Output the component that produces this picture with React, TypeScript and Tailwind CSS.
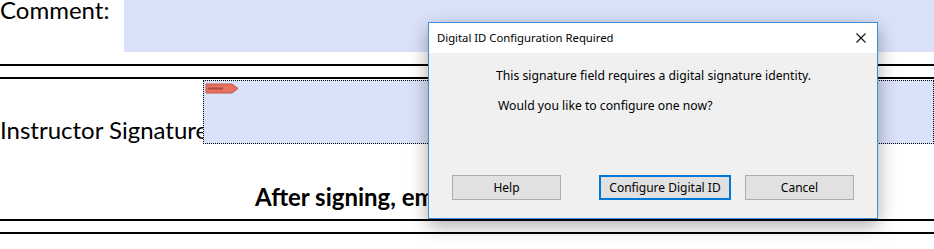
import React from 'react';

const docFont = { fontFamily: 'Lato, "Open Sans", sans-serif' };
const uiFont = { fontFamily: '"Noto Sans", "Liberation Sans", sans-serif' };

function Rule() {
  return <div className="h-[2px] w-full bg-black" />;
}

function FieldFlag() {
  return (
    <svg width="34" height="11" viewBox="0 0 34 11" className="absolute left-[1px] top-[2px]">
      <path d="M1 1 H27 L33 5.5 L27 10 H1 Z" fill="#e8705f" stroke="#c0564a" strokeWidth="1" />
      <rect x="3" y="4.5" width="15" height="2" fill="#7a2c26" opacity="0.55" />
    </svg>
  );
}

function DialogButton({ label, primary, width }: { label: string; primary?: boolean; width: string }) {
  return (
    <button
      className={`h-[25px] ${width} bg-[#e1e1e1] text-[12px] text-black ${
        primary ? 'border-2 border-[#0078d7]' : 'border border-[#adadad]'
      }`}
      style={uiFont}
    >
      {label}
    </button>
  );
}

function ConfigDialog() {
  return (
    <div className="absolute left-[428px] top-[22px] flex h-[197px] w-[450px] flex-col border border-[#3c8fd6] bg-[#f0f0f0] shadow-[0_6px_18px_rgba(0,0,0,0.35)]">
      {/* Title bar */}
      <div className="flex h-[30px] items-center justify-between bg-white pl-[8px] pr-[11px]">
        <span className="text-[11.3px] text-black" style={uiFont}>
          Digital ID Configuration Required
        </span>
        <svg width="10" height="10" viewBox="0 0 10 10">
          <path d="M0.5 0.5 L9.5 9.5 M9.5 0.5 L0.5 9.5" stroke="#111" strokeWidth="1.1" />
        </svg>
      </div>

      {/* Message */}
      <div className="flex flex-col pl-[67px] pt-[15px] text-[12.2px] leading-[16px] text-black" style={uiFont}>
        <p className="whitespace-nowrap">This signature field requires a digital signature identity.</p>
        <p className="mt-[14px] whitespace-nowrap pl-[2px]">Would you like to configure one now?</p>
      </div>

      {/* Buttons */}
      <div className="mt-auto flex items-center pb-[18px] pl-[23px]">
        <DialogButton label="Help" width="w-[109px]" />
        <div className="w-[38px]" />
        <DialogButton label="Configure Digital ID" width="w-[132px]" primary />
        <div className="w-[14px]" />
        <DialogButton label="Cancel" width="w-[109px]" />
      </div>
    </div>
  );
}

export default function App() {
  return (
    <div className="relative h-[249px] w-[934px] overflow-hidden bg-white text-black" style={docFont}>
      {/* Comment row */}
      <div className="flex h-[52px]">
        <div className="w-[124px] whitespace-nowrap text-[24px] leading-none -mt-[2px]">Comment:</div>
        <div className="flex-1 bg-[#dae2fa]" />
      </div>

      <div className="mt-[12px]">
        <Rule />
      </div>
      <div className="mt-[11px]">
        <Rule />
      </div>

      {/* Signature row */}
      <div className="mt-[1px] flex h-[64px]">
        <div className="flex w-[203px] items-end whitespace-nowrap pb-[2px] text-[24px] leading-none">
          Instructor Signature
        </div>
        <div className="relative flex-1 border border-dotted border-black bg-[#dae2fa]">
          <FieldFlag />
        </div>
      </div>

      {/* Instruction */}
      <div className="mt-[41px] h-[24px] whitespace-nowrap pl-[255px] text-[24px] font-bold leading-none">
        After signing, email this form to your instructor
      </div>

      <div className="mt-[10px]">
        <Rule />
      </div>
      <div className="mt-[11px]">
        <Rule />
      </div>

      <ConfigDialog />
    </div>
  );
}
